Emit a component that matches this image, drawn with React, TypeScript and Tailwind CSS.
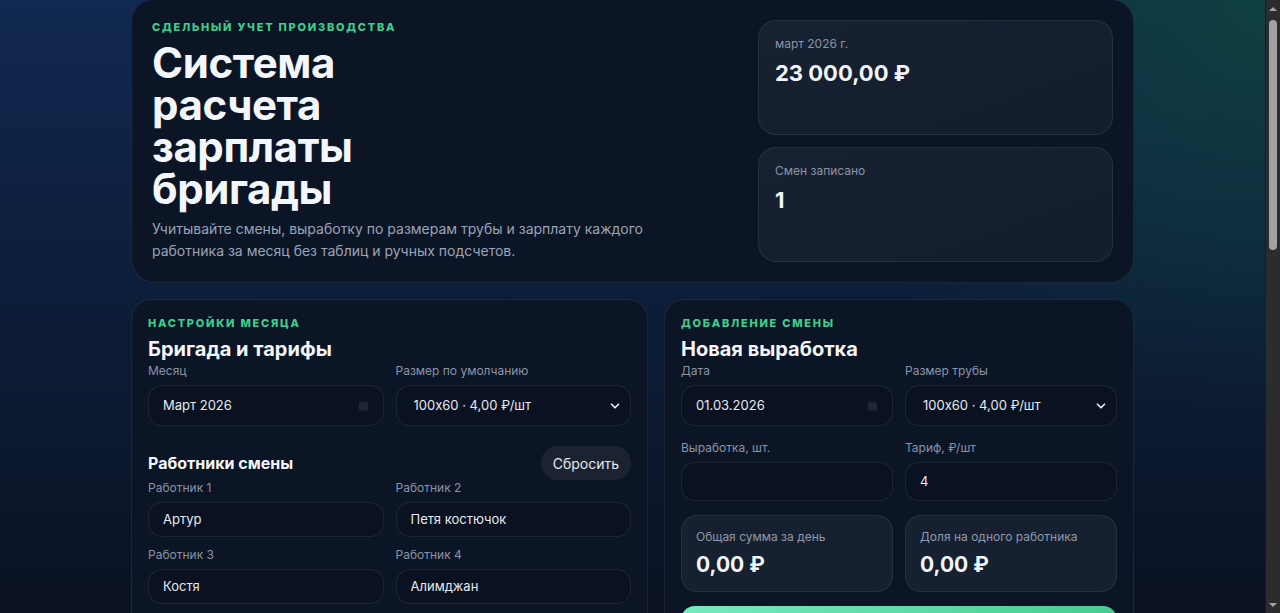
import { ChevronDown } from 'lucide-react';

const Eyebrow = ({ children }: { children: string }) => (
  <p className="text-[11px] leading-[14px] font-extrabold uppercase tracking-[0.16em] text-[#3ecf8e]">
    {children}
  </p>
);

const Label = ({ children }: { children: string }) => (
  <span className="block text-[12px] leading-4 text-[#8a94a6]">{children}</span>
);

const CalendarIcon = () => (
  <svg width="11" height="11" viewBox="0 0 12 12" className="text-[#1f2735]" fill="currentColor">
    <rect x="1" y="2" width="10" height="9" rx="1.5" />
    <rect x="3" y="0.5" width="1.5" height="3" rx="0.5" />
    <rect x="7.5" y="0.5" width="1.5" height="3" rx="0.5" />
  </svg>
);

const Field = ({
  label,
  value,
  h = 'h-[41px]',
  icon,
  select,
}: {
  label: string;
  value: string;
  h?: string;
  icon?: boolean;
  select?: boolean;
}) => (
  <label className="flex flex-col gap-[6px]">
    <Label>{label}</Label>
    <div
      className={`relative flex items-center ${h} rounded-[14px] border border-white/[0.08] bg-[#0a1221] ${
        select ? 'pl-[17px] pr-8' : 'px-[14px]'
      }`}
    >
      <input
        readOnly
        defaultValue={value}
        className="w-full bg-transparent text-[13px] text-[#e6e9ef] outline-none [font-feature-settings:'calt'_0]"
      />
      {icon && (
        <span className="absolute right-[14px] top-1/2 -translate-y-1/2">
          <CalendarIcon />
        </span>
      )}
      {select && (
        <ChevronDown
          size={14}
          strokeWidth={3}
          className="absolute right-[8px] top-1/2 -translate-y-1/2 text-[#e6e9ef]"
        />
      )}
    </div>
  </label>
);

const StatCard = ({ label, value }: { label: string; value: string }) => (
  <div className="flex-1 rounded-[18px] border border-white/[0.07] bg-[linear-gradient(160deg,#172131,#141d2c)] px-4 pt-[15px]">
    <p className="text-[12px] leading-4 text-[#8a94a6]">{label}</p>
    <p className="mt-[7px] text-[22px] leading-7 font-bold text-[#f1f4f8]">{value}</p>
  </div>
);

const SumBox = ({ label, value }: { label: string; value: string }) => (
  <div className="h-[77px] rounded-[16px] border border-white/[0.08] bg-[#162030] px-[14px] pt-[13px]">
    <p className="text-[12px] leading-4 text-[#8f99ab]">{label}</p>
    <p className="mt-[6px] text-[21px] leading-7 font-bold text-[#f1f4f8]">{value}</p>
  </div>
);

// window scrollbar as in the screenshot
const Scrollbar = () => (
  <div className="flex w-[15px] shrink-0 flex-col items-center border-l border-[#1c1c1c] bg-[#2c2c2c]">
    <div className="flex h-[17px] items-center justify-center">
      <div className="h-0 w-0 border-x-[4px] border-b-[4px] border-x-transparent border-b-[#a3a3a3]" />
    </div>
    <div className="mt-[3px] h-[230px] w-[8px] rounded-full bg-[#a1a1a1]" />
    <div className="flex-1" />
    <div className="flex h-[17px] items-center justify-center">
      <div className="h-0 w-0 border-x-[4px] border-t-[4px] border-x-transparent border-t-[#a3a3a3]" />
    </div>
  </div>
);

export default function App() {
  return (
    <div className="flex h-screen bg-[#0a1222] bg-[radial-gradient(ellipse_40%_70%_at_100%_0%,rgba(15,70,60,0.8),transparent),linear-gradient(180deg,#112850_0%,#0d1e3b_45%,#0a1222_100%)] font-['Inter',sans-serif] text-white">
      <main className="flex-1 overflow-y-auto [scrollbar-width:none]">
        <div className="mx-auto flex min-h-[1540px] max-w-[1003px] flex-col gap-4 pb-10">
          <section className="grid grid-cols-[1fr_355px] gap-6 rounded-b-[24px] rounded-t-[22px] border border-t-0 border-white/[0.08] bg-[#0b1526] p-5">
            <div>
              <Eyebrow>Сдельный учет производства</Eyebrow>
              <h1 className="mt-2 max-w-[320px] text-[42px] leading-[42px] font-bold tracking-[-0.01em] text-[#f3f6fa]">
                Система расчета зарплаты бригады
              </h1>
              <p className="mt-2 max-w-[500px] text-[14px] leading-[22px] text-[#9aa4b5]">
                Учитывайте смены, выработку по размерам трубы и зарплату каждого работника за месяц без таблиц и ручных подсчетов.
              </p>
            </div>
            <div className="flex h-[242px] flex-col gap-3">
              <StatCard label="март 2026 г." value="23 000,00 ₽" />
              <StatCard label="Смен записано" value="1" />
            </div>
          </section>

          <div className="grid grid-cols-[1.1fr_1fr] gap-4">
            <section className="rounded-[20px] border border-white/[0.08] bg-[#0b1526] p-4">
              <Eyebrow>Настройки месяца</Eyebrow>
              <h2 className="mt-[5px] text-[20px] leading-7 font-bold text-[#f3f6fa]">Бригада и тарифы</h2>
              <div className="grid grid-cols-2 gap-3">
                <Field label="Месяц" value="Март 2026" icon />
                <Field label="Размер по умолчанию" value="100x60 · 4,00 ₽/шт" select />
              </div>

              <div className="mt-5 flex items-center justify-between">
                <h3 className="text-[16px] leading-6 font-bold text-[#f3f6fa]">Работники смены</h3>
                <button className="h-[34px] rounded-full bg-[#1b2331] px-3 text-[14px] text-[#e6e9ef]">
                  Сбросить
                </button>
              </div>
              <div className="grid grid-cols-2 gap-x-3 gap-y-[10px]">
                <Field label="Работник 1" value="Артур" h="h-[35px]" />
                <Field label="Работник 2" value="Петя костючок" h="h-[35px]" />
                <Field label="Работник 3" value="Костя" h="h-[35px]" />
                <Field label="Работник 4" value="Алимджан" h="h-[35px]" />
              </div>
            </section>

            <section className="rounded-[20px] border border-white/[0.08] bg-[#0b1526] p-4">
              <Eyebrow>Добавление смены</Eyebrow>
              <h2 className="mt-[5px] text-[20px] leading-7 font-bold text-[#f3f6fa]">Новая выработка</h2>
              <div className="grid grid-cols-2 gap-x-3 gap-y-[14px]">
                <Field label="Дата" value="01.03.2026" icon />
                <Field label="Размер трубы" value="100x60 · 4,00 ₽/шт" select />
                <Field label="Выработка, шт." value="" h="h-[39px]" />
                <Field label="Тариф, ₽/шт" value="4" h="h-[39px]" />
              </div>
              <div className="mt-[14px] grid grid-cols-2 gap-3">
                <SumBox label="Общая сумма за день" value="0,00 ₽" />
                <SumBox label="Доля на одного работника" value="0,00 ₽" />
              </div>
              <button className="mt-[14px] h-[60px] w-full rounded-[14px] bg-[linear-gradient(90deg,#76eabf,#47cc90)] text-[15px] font-bold text-[#062018]">
                Добавить смену
              </button>
            </section>
          </div>
        </div>
      </main>
      <Scrollbar />
    </div>
  );
}
